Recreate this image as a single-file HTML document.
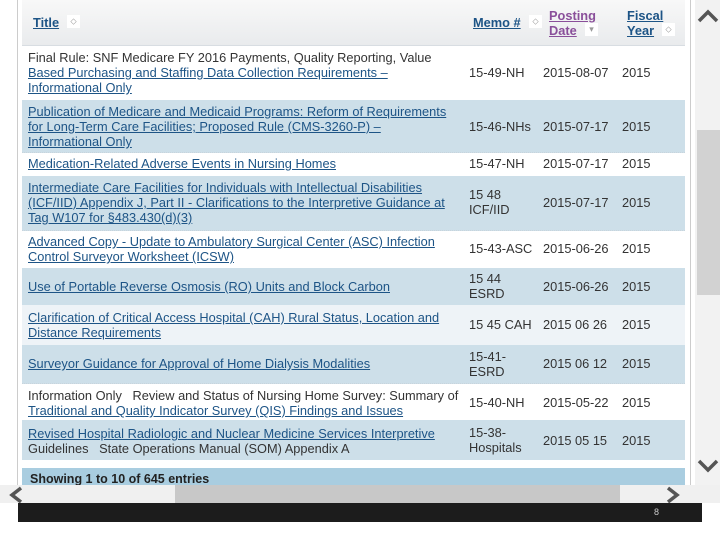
<!DOCTYPE html>
<html><head><meta charset="utf-8"><style>
body{margin:0;width:720px;height:540px;overflow:hidden;background:#fff;font-family:"Liberation Sans",Arial,sans-serif;position:relative}
.a{position:absolute}
.lb{left:17px;top:0;width:1px;height:485px;background:#ccc}
.rb{left:690px;top:0;width:1px;height:485px;background:#ccc}
.hdr{left:22px;top:0;width:663px;height:45px;background:linear-gradient(#f8f8f8,#e9ebed);border-bottom:1px solid #d8dde2}
.row{position:absolute;left:22px;width:663px;border-bottom:1px dotted #c8d4dc}
.b{background:#cddfe9}
.t{position:absolute;left:6px;width:440px;font-size:12.8px;line-height:15px;color:#333;white-space:nowrap}
.c{position:absolute;font-size:12.8px;line-height:15px;color:#333;white-space:nowrap}
a{color:#1d5486;text-decoration:underline}
.h{font-size:12.8px;font-weight:bold;color:#1d5486;text-decoration:underline;position:absolute}
.s{position:absolute;width:13px;height:13px;background:#fff;font-size:9px;color:#999;text-align:center;line-height:13px}
</style></head><body>
<div class="a lb"></div><div class="a rb"></div>
<div class="a hdr">
<span class="h" style="left:11px;top:15px">Title</span><span class="s" style="left:45px;top:15px">⬦</span>
<span class="h" style="left:451px;top:15px">Memo #</span><span class="s" style="left:507px;top:15px">⬦</span>
<span class="h" style="left:527px;top:8px;color:#8a4f9a;line-height:15px">Posting<br>Date</span><span class="s" style="left:563px;top:23px">▾</span>
<span class="h" style="left:605px;top:8px;line-height:15px">Fiscal<br>Year</span><span class="s" style="left:640px;top:23px">⬦</span>
</div>

<div class="row" style="top:45px;height:55px"><div class="t" style="top:5px">Final Rule: SNF Medicare FY 2016 Payments, Quality Reporting, Value<br><a>Based Purchasing and Staffing Data Collection Requirements –</a><br><a>Informational Only</a></div><div class="c" style="left:447px;top:20px">15-49-NH</div><div class="c" style="left:521px;top:20px">2015-08-07</div><div class="c" style="left:600px;top:20px">2015</div></div>
<div class="row b" style="top:100px;height:52px"><div class="t" style="top:4px"><a>Publication of Medicare and Medicaid Programs: Reform of Requirements</a><br><a>for Long-Term Care Facilities; Proposed Rule (CMS-3260-P) –</a><br><a>Informational Only</a></div><div class="c" style="left:447px;top:19px">15-46-NHs</div><div class="c" style="left:521px;top:19px">2015-07-17</div><div class="c" style="left:600px;top:19px">2015</div></div>
<div class="row" style="top:152px;height:24px"><div class="t" style="top:4px"><a>Medication-Related Adverse Events in Nursing Homes</a></div><div class="c" style="left:447px;top:4px">15-47-NH</div><div class="c" style="left:521px;top:4px">2015-07-17</div><div class="c" style="left:600px;top:4px">2015</div></div>
<div class="row b" style="top:176px;height:54px"><div class="t" style="top:4px"><a>Intermediate Care Facilities for Individuals with Intellectual Disabilities</a><br><a>(ICF/IID) Appendix J, Part II - Clarifications to the Interpretive Guidance at</a><br><a>Tag W107 for §483.430(d)(3)</a></div><div class="c" style="left:447px;top:11px">15 48<br>ICF/IID</div><div class="c" style="left:521px;top:19px">2015-07-17</div><div class="c" style="left:600px;top:19px">2015</div></div>
<div class="row" style="top:230px;height:38px"><div class="t" style="top:4px"><a>Advanced Copy - Update to Ambulatory Surgical Center (ASC) Infection</a><br><a>Control Surveyor Worksheet (ICSW)</a></div><div class="c" style="left:447px;top:11px">15-43-ASC</div><div class="c" style="left:521px;top:11px">2015-06-26</div><div class="c" style="left:600px;top:11px">2015</div></div>
<div class="row b" style="top:268px;height:37px"><div class="t" style="top:11px"><a>Use of Portable Reverse Osmosis (RO) Units and Block Carbon</a></div><div class="c" style="left:447px;top:3px">15 44<br>ESRD</div><div class="c" style="left:521px;top:11px">2015-06-26</div><div class="c" style="left:600px;top:11px">2015</div></div>
<div class="row" style="top:305px;height:40px;background:#eef3f7"><div class="t" style="top:5px"><a>Clarification of Critical Access Hospital (CAH) Rural Status, Location and</a><br><a>Distance Requirements</a></div><div class="c" style="left:447px;top:12px">15 45 CAH</div><div class="c" style="left:521px;top:12px">2015 06 26</div><div class="c" style="left:600px;top:12px">2015</div></div>
<div class="row b" style="top:345px;height:38px"><div class="t" style="top:11px"><a>Surveyor Guidance for Approval of Home Dialysis Modalities</a></div><div class="c" style="left:447px;top:4px">15-41-<br>ESRD</div><div class="c" style="left:521px;top:11px">2015 06 12</div><div class="c" style="left:600px;top:11px">2015</div></div>
<div class="row" style="top:383px;height:37px"><div class="t" style="top:5px">Information Only &nbsp; Review and Status of Nursing Home Survey: Summary of<br><a>Traditional and Quality Indicator Survey (QIS) Findings and Issues</a></div><div class="c" style="left:447px;top:12px">15-40-NH</div><div class="c" style="left:521px;top:12px">2015-05-22</div><div class="c" style="left:600px;top:12px">2015</div></div>
<div class="row b" style="top:420px;height:40px;border:none"><div class="t" style="top:6px"><a>Revised Hospital Radiologic and Nuclear Medicine Services Interpretive</a><br>Guidelines &nbsp; State Operations Manual (SOM) Appendix A</div><div class="c" style="left:447px;top:5px">15-38-<br>Hospitals</div><div class="c" style="left:521px;top:13px">2015 05 15</div><div class="c" style="left:600px;top:13px">2015</div></div>
<div class="a" style="left:22px;top:468px;width:663px;height:17px;background:#a9cde0;font-size:12.5px;font-weight:bold;color:#222;line-height:22px;text-indent:8px;overflow:hidden">Showing 1 to 10 of 645 entries</div>

<div class="a" style="left:695px;top:0;width:25px;height:485px;background:#f2f2f2"></div>
<div class="a" style="left:697px;top:130px;width:23px;height:165px;background:#d2d2d2"></div>
<svg class="a" style="left:697px;top:8px" width="22" height="16"><path d="M2 13 L11 4 L20 13" fill="none" stroke="#555" stroke-width="3.5"/></svg>
<svg class="a" style="left:697px;top:458px" width="22" height="16"><path d="M2 3 L11 12 L20 3" fill="none" stroke="#555" stroke-width="3.5"/></svg>

<div class="a" style="left:0;top:485px;width:720px;height:18px;background:#f0f0f0"></div>
<div class="a" style="left:175px;top:485px;width:445px;height:18px;background:#c8c8c8"></div>
<svg class="a" style="left:8px;top:486px" width="16" height="18"><path d="M13 2 L4 9 L13 16" fill="none" stroke="#555" stroke-width="3.5"/></svg>
<svg class="a" style="left:665px;top:486px" width="16" height="18"><path d="M3 2 L12 9 L3 16" fill="none" stroke="#555" stroke-width="3.5"/></svg>
<div class="a" style="left:18px;top:503px;width:684px;height:19px;background:#1c1c1c;color:#ccc;font-size:9px;line-height:19px"><span style="position:absolute;left:636px">8</span></div>
</body></html>
